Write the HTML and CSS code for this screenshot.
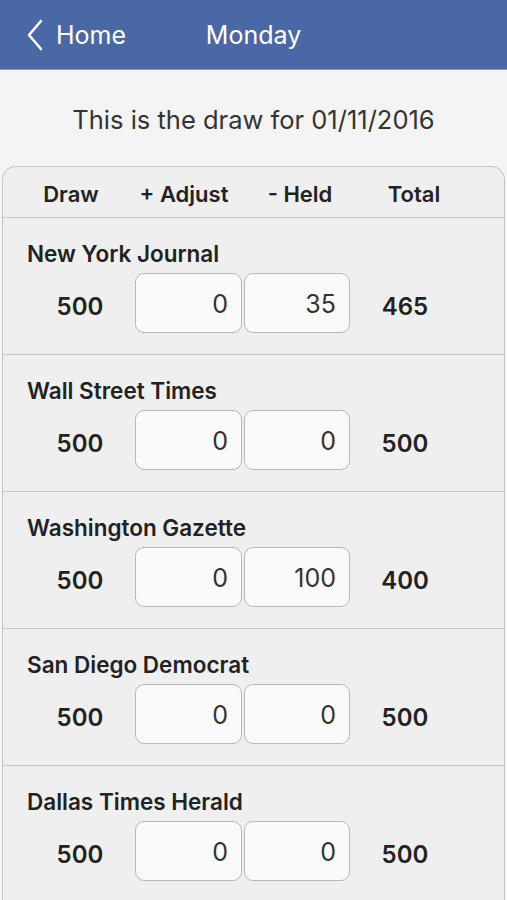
FILE: index.html
```html
<!DOCTYPE html>
<html lang="en">
<head>
    <meta charset="UTF-8">
    <meta name="viewport" content="width=device-width, initial-scale=1.0">
    <title>Monday</title>
    <link rel="stylesheet" href="styles.css">
</head>
<body>
    <div class="navbar">
        <a class="back" href="#">
            <svg width="18" height="32" viewBox="0 0 18 32"><path d="M15 2 L3 16 L15 30" fill="none" stroke="#fff" stroke-width="2.6" stroke-linecap="round" stroke-linejoin="round"/></svg>
            <span>Home</span>
        </a>
        <div class="nav-title">Monday</div>
    </div>

    <p class="subtitle">This is the draw for 01/11/2016</p>

    <div class="card">
        <div class="card-head">
            <span>Draw</span>
            <span>+ Adjust</span>
            <span>- Held</span>
            <span>Total</span>
        </div>

        <div class="paper">
            <div class="paper-name">New York Journal</div>
            <div class="paper-nums">
                <span class="num">500</span>
                <input class="box" type="text" value="0">
                <input class="box" type="text" value="35">
                <span class="num">465</span>
            </div>
        </div>
        <div class="paper">
            <div class="paper-name">Wall Street Times</div>
            <div class="paper-nums">
                <span class="num">500</span>
                <input class="box" type="text" value="0">
                <input class="box" type="text" value="0">
                <span class="num">500</span>
            </div>
        </div>
        <div class="paper">
            <div class="paper-name">Washington Gazette</div>
            <div class="paper-nums">
                <span class="num">500</span>
                <input class="box" type="text" value="0">
                <input class="box" type="text" value="100">
                <span class="num">400</span>
            </div>
        </div>
        <div class="paper">
            <div class="paper-name">San Diego Democrat</div>
            <div class="paper-nums">
                <span class="num">500</span>
                <input class="box" type="text" value="0">
                <input class="box" type="text" value="0">
                <span class="num">500</span>
            </div>
        </div>
        <div class="paper">
            <div class="paper-name">Dallas Times Herald</div>
            <div class="paper-nums">
                <span class="num">500</span>
                <input class="box" type="text" value="0">
                <input class="box" type="text" value="0">
                <span class="num">500</span>
            </div>
        </div>
    </div>
</body>
</html>
```

FILE: styles.css
```css
body, html {
    margin: 0;
    background-color: #f4f4f4;
    font-family: Inter, "Noto Sans", sans-serif;
    color: #222;
}

body {
    height: 900px;
    overflow: hidden;
}

.navbar {
    position: relative;
    height: 69px;
    background-color: #4b68a6;
    border-bottom: 1px solid #8a9cc4;
    display: flex;
    align-items: center;
    color: white;
}

.back {
    display: flex;
    align-items: center;
    gap: 12px;
    padding-left: 26px;
    color: white;
    text-decoration: none;
    font-size: 25px;
}

.nav-title {
    position: absolute;
    left: 0;
    right: 0;
    text-align: center;
    font-size: 25px;
    pointer-events: none;
}

.subtitle {
    margin: 0;
    padding: 35px 0 31px;
    text-align: center;
    font-size: 25.5px;
    line-height: 30px;
    color: #333;
}

.card {
    margin: 0 2px;
    background-color: #efefef;
    border: 1px solid #c6c6c6;
    border-bottom: none;
    border-radius: 14px 14px 0 0;
}

.card-head {
    box-sizing: border-box;
    display: grid;
    grid-template-columns: 136px 90px 142px 86px;
    height: 51px;
    padding-top: 3px;
    align-items: center;
    font-size: 22px;
    font-weight: 600;
    white-space: nowrap;
    border-bottom: 1px solid #c6c6c6;
}

.card-head span {
    text-align: center;
}

.paper {
    padding: 23px 0 21px 24px;
    border-bottom: 1px solid #c6c6c6;
}

.paper-name {
    font-size: 22.5px;
    font-weight: 600;
    line-height: 26px;
    margin-bottom: 6px;
}

.paper-nums {
    display: grid;
    grid-template-columns: 106px 107px 106px 106px;
    column-gap: 2px;
    align-items: center;
}

.num {
    padding-top: 6px;
    text-align: center;
    font-size: 24px;
    font-weight: 600;
}

.box {
    box-sizing: border-box;
    width: 100%;
    height: 60px;
    margin: 0;
    padding: 2px 13px 0 0;
    border: 1.5px solid #b8b8b8;
    border-radius: 9px;
    background-color: #fafafa;
    text-align: right;
    font-family: Inter, "Noto Sans", sans-serif;
    font-size: 25px;
    color: #333;
}
```
